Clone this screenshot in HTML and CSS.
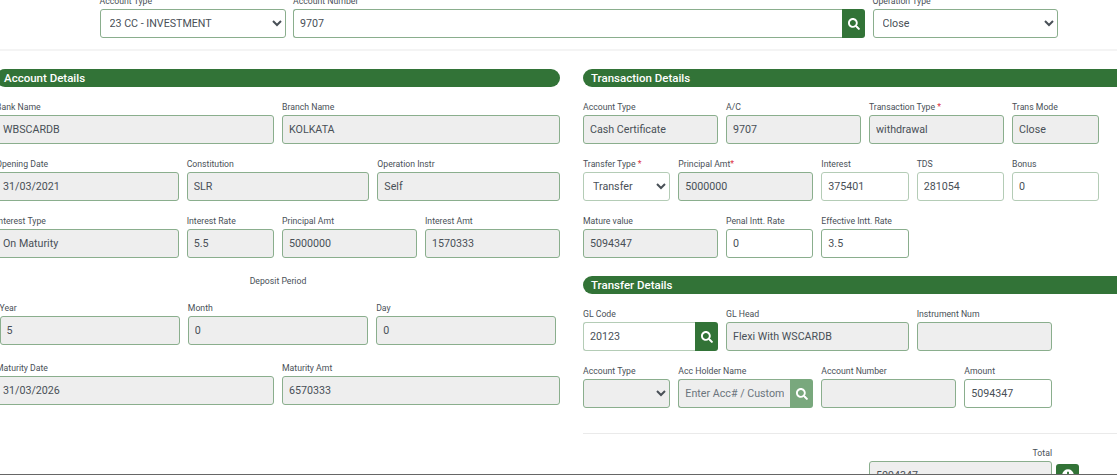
FILE: index.html
```html
<!DOCTYPE html>
<html>
    <head>
        <title>Close Account</title>
        <link rel="stylesheet" href="styles.css">
    </head>
    <body>
        <div class="page">
            <form class="searchRow">
                <div class="field">
                    <label>Account Type</label>
                    <select><option>23 CC - INVESTMENT</option></select>
                </div>
                <div class="field">
                    <label>Account Number</label>
                    <div class="group">
                        <input type="text" value="9707">
                        <button type="button" class="iconBtn"><svg viewBox="0 0 512 512"><path d="M505 442.700L405.300 343c-4.500-4.500-10.600-7-17-7H372c27.600-35.300 44-79.700 44-128C416 93.100 322.900 0 208 0S0 93.100 0 208s93.100 208 208 208c48.300 0 92.700-16.400 128-44v16.300c0 6.400 2.500 12.500 7 17l99.700 99.700c9.400 9.400 24.600 9.400 33.900 0l28.300-28.300c9.400-9.400 9.400-24.600.1-34zM208 336c-70.700 0-128-57.200-128-128 0-70.700 57.200-128 128-128 70.700 0 128 57.200 128 128 0 70.700-57.200 128-128 128z"/></svg></button>
                    </div>
                </div>
                <div class="field">
                    <label>Operation Type</label>
                    <select><option>Close</option></select>
                </div>
            </form>
            <hr class="topLine">

            <div class="columns">
                <section class="panel leftPanel">
                    <h4 class="bar">Account Details</h4>
                    <div class="row">
                        <div class="field c6"><label>Bank Name</label><input type="text" value="WBSCARDB" disabled></div>
                        <div class="field c6"><label>Branch Name</label><input type="text" value="KOLKATA" disabled></div>
                    </div>
                    <div class="row">
                        <div class="field c4"><label>Opening Date</label><input type="text" value="31/03/2021" disabled></div>
                        <div class="field c4"><label>Constitution</label><input type="text" value="SLR" disabled></div>
                        <div class="field c4"><label>Operation Instr</label><input type="text" value="Self" disabled></div>
                    </div>
                    <div class="row">
                        <div class="field c4"><label>Interest Type</label><input type="text" value="On Maturity" disabled></div>
                        <div class="field c2"><label>Interest Rate</label><input type="text" value="5.5" disabled></div>
                        <div class="field c3"><label>Principal Amt</label><input type="text" value="5000000" disabled></div>
                        <div class="field c3"><label>Interest Amt</label><input type="text" value="1570333" disabled></div>
                    </div>
                    <p class="periodTitle">Deposit Period</p>
                    <div class="periodRow">
                        <div class="field"><label>Year</label><input type="text" value="5" disabled></div>
                        <div class="field"><label>Month</label><input type="text" value="0" disabled></div>
                        <div class="field"><label>Day</label><input type="text" value="0" disabled></div>
                    </div>
                    <div class="row maturityRow">
                        <div class="field c6"><label>Maturity Date</label><input type="text" value="31/03/2026" disabled></div>
                        <div class="field c6"><label>Maturity Amt</label><input type="text" value="6570333" disabled></div>
                    </div>
                </section>

                <section class="panel">
                    <h4 class="bar">Transaction Details</h4>
                    <div class="row">
                        <div class="field c3"><label>Account Type</label><input type="text" value="Cash Certificate" disabled></div>
                        <div class="field c3"><label>A/C</label><input type="text" value="9707" disabled></div>
                        <div class="field c3"><label>Transaction Type <span class="req">*</span></label><input type="text" value="withdrawal" disabled></div>
                        <div class="field c2"><label>Trans Mode</label><input type="text" value="Close" disabled></div>
                    </div>
                    <div class="row">
                        <div class="field c2"><label>Transfer Type <span class="req">*</span></label><select class="pale"><option>Transfer</option></select></div>
                        <div class="field c3"><label>Principal Amt<span class="req">*</span></label><input type="text" value="5000000" disabled></div>
                        <div class="field c2"><label>Interest</label><input type="text" value="375401" class="pale"></div>
                        <div class="field c2"><label>TDS</label><input type="text" value="281054" class="pale"></div>
                        <div class="field c2"><label>Bonus</label><input type="text" value="0" class="pale"></div>
                    </div>
                    <div class="row">
                        <div class="field c3"><label>Mature value</label><input type="text" value="5094347" disabled></div>
                        <div class="field c2"><label>Penal Intt. Rate</label><input type="text" value="0"></div>
                        <div class="field c2"><label>Effective Intt. Rate</label><input type="text" value="3.5"></div>
                    </div>

                    <h4 class="bar barSecond">Transfer Details</h4>
                    <div class="row">
                        <div class="field c3">
                            <label>GL Code</label>
                            <div class="group">
                                <input type="text" value="20123" class="pale">
                                <button type="button" class="iconBtn"><svg viewBox="0 0 512 512"><path d="M505 442.700L405.300 343c-4.500-4.500-10.600-7-17-7H372c27.600-35.300 44-79.700 44-128C416 93.100 322.900 0 208 0S0 93.100 0 208s93.100 208 208 208c48.300 0 92.700-16.400 128-44v16.300c0 6.400 2.500 12.500 7 17l99.700 99.700c9.400 9.400 24.600 9.400 33.900 0l28.300-28.300c9.400-9.400 9.400-24.600.1-34zM208 336c-70.700 0-128-57.200-128-128 0-70.700 57.200-128 128-128 70.700 0 128 57.200 128 128 0 70.700-57.200 128-128 128z"/></svg></button>
                            </div>
                        </div>
                        <div class="field c4"><label>GL Head</label><input type="text" value="Flexi With WSCARDB" disabled></div>
                        <div class="field c3"><label>Instrument Num</label><input type="text" disabled></div>
                    </div>
                    <div class="row">
                        <div class="field c2"><label>Account Type</label><select disabled><option></option></select></div>
                        <div class="field c3">
                            <label>Acc Holder Name</label>
                            <div class="group">
                                <input type="text" placeholder="Enter Acc# / Customer Name" disabled>
                                <button type="button" class="iconBtn off"><svg viewBox="0 0 512 512"><path d="M505 442.700L405.300 343c-4.500-4.500-10.600-7-17-7H372c27.600-35.300 44-79.700 44-128C416 93.100 322.900 0 208 0S0 93.100 0 208s93.100 208 208 208c48.300 0 92.700-16.400 128-44v16.300c0 6.400 2.500 12.500 7 17l99.700 99.700c9.400 9.400 24.600 9.400 33.900 0l28.300-28.300c9.400-9.400 9.400-24.600.1-34zM208 336c-70.700 0-128-57.200-128-128 0-70.700 57.200-128 128-128 70.700 0 128 57.200 128 128 0 70.700-57.200 128-128 128z"/></svg></button>
                            </div>
                        </div>
                        <div class="field c3"><label>Account Number</label><input type="text" disabled></div>
                        <div class="field c2"><label>Amount</label><input type="text" value="5094347"></div>
                    </div>
                    <hr class="midLine">
                    <div class="totalRow">
                        <div class="field totalField">
                            <label>Total</label>
                            <input type="text" value="5094347" disabled>
                        </div>
                        <button type="button" class="iconBtn addBtn"><svg viewBox="0 0 512 512"><path d="M256 8C119 8 8 119 8 256s111 248 248 248 248-111 248-248S393 8 256 8zm144 276c0 6.600-5.400 12-12 12h-92v92c0 6.600-5.400 12-12 12h-56c-6.600 0-12-5.400-12-12v-92h-92c-6.600 0-12-5.400-12-12v-56c0-6.600 5.400-12 12-12h92v-92c0-6.600 5.400-12 12-12h56c6.600 0 12 5.400 12 12v92h92c6.600 0 12 5.400 12 12v56z"/></svg></button>
                    </div>
                </section>
            </div>
        </div>
    </body>
</html>
```

FILE: styles.css
```css
html, body {
    margin: 0;
    background: #fff;
}

body {
    font-family: Roboto, "Liberation Sans", sans-serif;
    color: #495057;
}

/* window is scrolled a little: top and left edge of the form are cut off */
.page {
    box-sizing: border-box;
    height: 475px;
    overflow: hidden;
    border-bottom: 1px solid #666;
}

.searchRow {
    display: grid;
    grid-template-columns: 186px 572px 185px;
    column-gap: 7.500px;
    margin-top: -5px;
    padding-left: 99.500px;
}

.topLine {
    height: 2px;
    margin: 11px 0 18px;
    border: none;
    background: #f4f4f4;
}

.columns {
    display: flex;
    gap: 23px;
    margin-left: -4px;
    width: 1151px;
}

.panel {
    width: 564px;
    flex: none;
}

.bar {
    height: 18px;
    margin: 0 0 14px;
    padding: 0 8px;
    border-radius: 9px;
    background: #327337;
    color: #fff;
    font-size: 11.500px;
    font-weight: 500;
    line-height: 18px;
}

.barSecond {
    margin-top: 18px;
}

.row {
    display: grid;
    grid-template-columns: repeat(12, 1fr);
    gap: 8px;
    margin-bottom: 14px;
}

.c2 { grid-column: span 2; }
.c3 { grid-column: span 3; }
.c4 { grid-column: span 4; }
.c6 { grid-column: span 6; }

.field {
    min-width: 0;
}

label {
    display: block;
    height: 12px;
    margin-bottom: 2px;
    color: #495057;
    font-size: 8.700px;
    line-height: 13px;
    white-space: nowrap;
}

.req {
    color: #dc3545;
}

input, select {
    display: block;
    box-sizing: border-box;
    width: 100%;
    height: 29px;
    padding: 0 6px;
    border: 1px solid #8aae8d;
    border-radius: 3px;
    background: #fff;
    color: #495057;
    font-family: inherit;
    font-size: 10.700px;
    outline: none;
}

select {
    padding-left: 5px;
}

input.pale, select.pale {
    border-color: #b4ccb6;
}

input:disabled, select:disabled {
    background: #eee;
    opacity: 1;
}

input::placeholder {
    color: #6c757d;
}

.group {
    display: flex;
}

.group input {
    flex: 1;
    min-width: 0;
    border-right: none;
    border-radius: 3px 0 0 3px;
}

.iconBtn {
    display: flex;
    flex: none;
    align-items: center;
    justify-content: center;
    box-sizing: border-box;
    width: 23px;
    height: 29px;
    padding: 0;
    border: none;
    border-radius: 0 3px 3px 0;
    background: #327337;
}

.iconBtn svg {
    width: 12px;
    height: 12px;
    fill: #fff;
}

.iconBtn.off {
    background: #79a87d;
}

.periodTitle {
    margin: 0 0 15px;
    padding-top: 3px;
    color: #495057;
    font-size: 8.700px;
    line-height: 12px;
    text-align: center;
}

.periodRow {
    display: grid;
    grid-template-columns: repeat(3, 1fr);
    gap: 8px;
    margin-bottom: 17px;
    padding: 0 3.500px;
}

.midLine {
    height: 1px;
    margin: 25px 0 13px;
    border: none;
    background: #eaeaea;
}

.totalRow {
    display: flex;
    gap: 4px;
    align-items: flex-start;
    padding-left: 286px;
}

.totalField {
    width: 183px;
}

.totalField label {
    text-align: right;
}

.addBtn {
    height: 21px;
    margin-top: 17px;
    border-radius: 3px;
}
```
